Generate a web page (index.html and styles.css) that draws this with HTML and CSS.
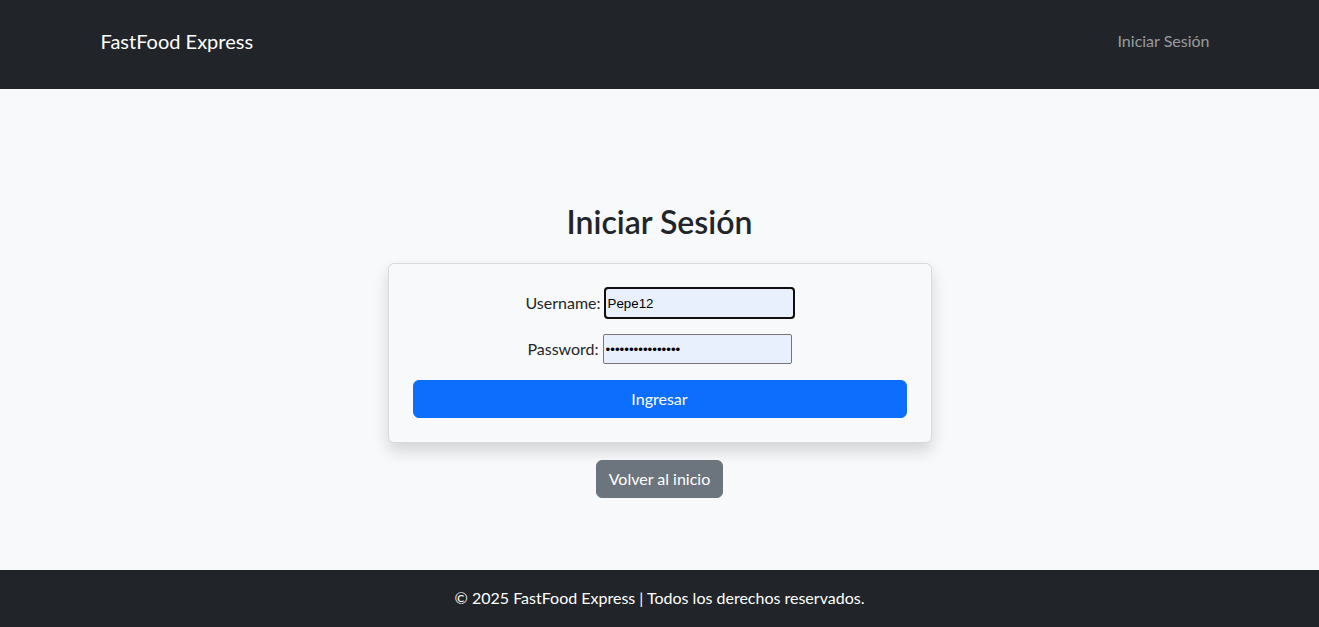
FILE: index.html
```html
<!DOCTYPE html>
<html lang="es">
<head>
<meta charset="utf-8">
<title>Iniciar Sesión - FastFood Express</title>
<link rel="stylesheet" href="styles.css">
</head>
<body>
<header class="navbar">
  <div class="nav-container">
    <a class="brand" href="#">FastFood Express</a>
    <a class="nav-link" href="#">Iniciar Sesión</a>
  </div>
</header>
<main class="main">
  <h2 class="title">Iniciar Sesión</h2>
  <form class="card">
    <div class="row">
      <label class="label" for="username">Username:</label>
      <input class="input focused" id="username" type="text" value="Pepe12">
    </div>
    <div class="row">
      <label class="label" for="password">Password:</label>
      <input class="input" id="password" type="password" value="contraseña123456">
    </div>
    <button class="btn btn-primary" type="button">Ingresar</button>
  </form>
  <a class="btn btn-secondary" href="#">Volver al inicio</a>
</main>
<footer class="footer">© 2025 FastFood Express | Todos los derechos reservados.</footer>
</body>
</html>
```
FILE: styles.css
```css
* { box-sizing: border-box; }
html, body { height: 100%; }
body {
  margin: 0;
  font-family: "Segoe UI", Lato, "Noto Sans", sans-serif;
  font-size: 16px;
  line-height: 1.5;
  color: #212529;
  background: #f8f9fa;
  display: flex;
  flex-direction: column;
}
a { text-decoration: none; }

.navbar {
  background: #212529;
  height: 89px;
  flex: none;
}
.nav-container {
  max-width: 1140px;
  margin: 0 auto;
  padding: 0 12px 0 11px;
  height: 100%;
  display: flex;
  align-items: center;
  justify-content: space-between;
}
.brand {
  color: #fff;
  font-size: 20px;
  line-height: 30px;
  padding-bottom: 8px;
}
.nav-link {
  color: rgba(255, 255, 255, 0.55);
  padding: 0 8px 7px;
  font-size: 16px;
}

.main {
  flex: 1;
  display: flex;
  flex-direction: column;
  align-items: center;
  padding-top: 114px;
}
.title {
  margin: 0 0 22px;
  font-size: 32px;
  font-weight: 600;
  line-height: 1.2;
}
.card {
  width: 544px;
  padding: 24px;
  background: #f8f9fa;
  border: 1px solid rgba(0, 0, 0, 0.12);
  border-radius: 6px;
  box-shadow: 0 8px 16px rgba(0, 0, 0, 0.15);
  margin: 0;
  display: flex;
  flex-direction: column;
  align-items: stretch;
}
.row {
  display: flex;
  justify-content: center;
  align-items: center;
  gap: 4px;
  margin-bottom: 16px;
}
.label { color: #212529; }
.input {
  width: 189px;
  height: 30px;
  border: 1px solid #767676;
  border-radius: 2px;
  background: #e8f0fe;
  font-family: "Liberation Sans", Arial, sans-serif;
  font-size: 13.33px;
  padding: 1px 2px;
  color: #000;
}
.input.focused {
  outline: 2px solid #101010;
  outline-offset: -1px;
  border-radius: 3px;
}
.btn {
  display: inline-block;
  border: 1px solid transparent;
  border-radius: 6px;
  font-family: inherit;
  font-size: 16px;
  line-height: 24px;
  padding: 6px 12px;
  color: #fff;
  text-align: center;
  cursor: pointer;
}
.btn-primary {
  background: #0d6efd;
  border-color: #0d6efd;
  width: 100%;
}
.btn-secondary {
  background: #6c757d;
  border-color: #6c757d;
  margin-top: 17px;
}

.footer {
  flex: none;
  background: #212529;
  color: #fff;
  height: 57px;
  display: flex;
  align-items: center;
  justify-content: center;
  padding-bottom: 1px;
}
```
